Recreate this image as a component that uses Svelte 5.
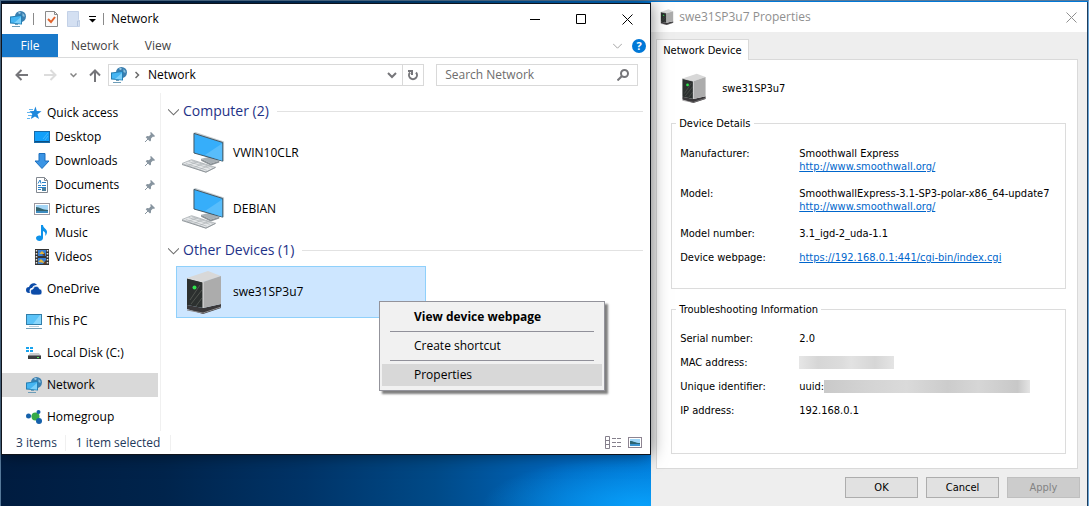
<script>
  const places = [
    { label: "Quick access", icon: "star" },
    { label: "Desktop", icon: "desktop", child: true, pinned: true },
    { label: "Downloads", icon: "download", child: true, pinned: true },
    { label: "Documents", icon: "document", child: true, pinned: true },
    { label: "Pictures", icon: "picture", child: true, pinned: true },
    { label: "Music", icon: "music", child: true },
    { label: "Videos", icon: "video", child: true },
    { label: "OneDrive", icon: "cloud", top: true },
    { label: "This PC", icon: "pc", top: true },
    { label: "Local Disk (C:)", icon: "disk", top: true },
    { label: "Network", icon: "network", top: true },
    { label: "Homegroup", icon: "homegroup", top: true },
  ];

  const details = [
    { label: "Manufacturer:", value: "Smoothwall Express", href: "http://www.smoothwall.org/" },
    { label: "Model:", value: "SmoothwallExpress-3.1-SP3-polar-x86_64-update7", href: "http://www.smoothwall.org/" },
    { label: "Model number:", value: "3.1_igd-2_uda-1.1" },
    { label: "Device webpage:", href: "https://192.168.0.1:441/cgi-bin/index.cgi" },
  ];

  const troubleshooting = [
    { label: "Serial number:", value: "2.0" },
    { label: "MAC address:", hidden: "mac" },
    { label: "Unique identifier:", value: "uuid:", hidden: "uuid" },
    { label: "IP address:", value: "192.168.0.1" },
  ];

  let current = $state("Network");
  let query = $state("");
</script>

{#snippet icon(name)}
  <svg width="16" height="16" viewBox="0 0 16 16" aria-hidden="true">
    {#if name === "star"}
      <path d="M9.500 1.500 10.800 6l4.700.2-4 3L13 14l-4-2.600L4.800 14 6.300 9 3.500 6.200 7.800 6z" fill="#1e88dc" />
      <path d="M3 4.500h4M1 7.500h4M2 10.500h4M1 13.500h3" stroke="#62b4ee" />
    {:else if name === "desktop"}
      <rect x=".5" y="2.500" width="15" height="11" fill="#12a0fb" stroke="#186aa8" />
      <path d="M1 12.500h14" stroke="#0b4f83" />
      <path d="M9 10l5-6M11 11l3-4" stroke="#5cc2ff" stroke-width=".7" />
    {:else if name === "download"}
      <path d="M5 .5h6V8h4L8 15.500 1 8h4z" fill="#3a94e4" stroke="#1c6fbd" />
    {:else if name === "document"}
      <path d="M2.500.5h8l3 3v12h-11z" fill="#fff" stroke="#828890" />
      <path d="M10.500.5v3h3" fill="none" stroke="#828890" />
      <path d="M4 6.500 6 3l1 3.500M8 5.500h4M4 8.500h3M8 8.500h4M4 10.500h8M4 12.500h3" fill="none" stroke="#2a82c9" />
      <path d="M8 11h4v3H8z" fill="#4d7f9b" />
    {:else if name === "picture"}
      <rect x=".5" y="2.500" width="15" height="11" fill="#fff" stroke="#9b98a0" />
      <path d="M2 4h12v8H2z" fill="#a4d5f5" />
      <path d="M2 6c4 0 6 3 12 3v3H2z" fill="#33626c" />
      <path d="M2 10h12v2H2z" fill="#3d8cc0" />
    {:else if name === "music"}
      <path d="M7 0h2c0 3 4 4 4 7 0 2-1 3-2 4 1-3 0-4-2-5v7c0 4-7 4-7 0 0-2 3-3 5-2z" fill="#0e92ea" />
    {:else if name === "video"}
      <path d="M1 0h14v16H1z" fill="#343434" />
      <path d="M2.500 1v15M13.500 1v15" stroke="#e6e6e6" stroke-width="1.500" stroke-dasharray="1.500 1.500" />
      <path d="M4 1h8v6H4zM4 9h8v6H4z" fill="#3a7fd4" />
      <path d="M5 5l3-3 3 3zM4 13l3-3 4 4z" fill="#e6b63c" />
      <path d="M8 6l3-2v3zM9 15l3-4v4z" fill="#5c3a23" />
    {:else if name === "cloud"}
      <path d="M0 9c0-2 1-3 3-3 1-4 6-5 8-2-3 0-4 1-5 3-2 0-3 2-2 5H3c-2 0-3-1-3-3z" fill="#0b4ba8" />
      <path d="M4.500 11c0-2 1-3 2.500-3 1-4 6-3 6.500 0 1.500 0 2.500 1 2.500 3s-1 3-3 3H8c-2 0-3.500-1-3.500-3z" fill="#0b4ba8" stroke="#fff" stroke-width=".7" />
    {:else if name === "pc"}
      <rect x=".5" y="1.500" width="15" height="10" fill="#5bc3f8" stroke="#327ea9" />
      <path d="M7 11 14 2h1v9z" fill="#8ad7fc" />
      <path d="M3 13.500h10" stroke="#b9ccd8" />
      <path d="M0 15.500h16" stroke="#74a0b8" />
    {:else if name === "disk"}
      <path d="M0 2h3v2H0zM4 2h3v2H4zM0 5h3v2H0zM4 5h3v2H4z" fill="#17a3ee" />
      <path d="M4 8h9l2 3H2z" fill="#c9cbcd" />
      <path d="M2 10.500h13V14H2z" fill="#3b3d3f" />
      <path d="M11 12.500h2" stroke="#5be45b" />
    {:else if name === "network"}
      <circle cx="10.500" cy="5.500" r="5.500" fill="#3a7fb0" />
      <path d="M8 1.500 10 1l1 1-2 1z" fill="#a8d4ea" />
      <path d="M12.500 2l2 2v2l-2-1z" fill="#8cc3e0" />
      <path d="M0 5.500 12 4v9.500L0 12.500z" fill="#2580b5" />
      <path d="M1 6.500 11 5v7.500L1 11.500z" fill="#45b5f2" />
      <path d="M4 12 11 6v6.500z" fill="#7bd0fb" />
      <path d="M2 15.500h8M5 13.500h3" stroke="#6e9db8" />
    {:else if name === "homegroup"}
      <path d="M3 7l7 0M12 3l-2 5 3 5" stroke="#9bc6dd" fill="none" />
      <circle cx="9.500" cy="7.500" r="4" fill="#35aa47" />
      <circle cx="2.500" cy="7" r="2.500" fill="#1561ab" />
      <circle cx="12.500" cy="3" r="2" fill="#1561ab" />
      <circle cx="13" cy="12" r="3" fill="#1561ab" />
    {/if}
  </svg>
{/snippet}

{#snippet chevron(size = 10)}
  <svg width={size} height={size} viewBox="0 0 10 10" fill="none" stroke="currentColor" aria-hidden="true">
    <path d="M0 3l5 5 5-5" />
  </svg>
{/snippet}

{#snippet computer()}
  <svg width="44" height="44" viewBox="0 0 46 46" aria-hidden="true">
    <path d="M20 29l9-2 10 4-9 3z" fill="#a8b0b5" />
    <path d="M20 29v2l10 5 9-3v-2l-9 3z" fill="#8b9297" />
    <path d="M12 2 14 1l30 10v20l-1 1z" fill="#c3cbd0" />
    <path d="M12.500 2.500 42.500 12v19.500l-30-8.500z" fill="#36aefa" stroke="#41525c" />
    <path d="M24 25 42 13v18z" fill="#58bdfb" />
    <path d="M0 34l10-4 25 8-10 5z" fill="#e6e8ea" stroke="#b5babd" />
    <path d="M4 34l22 7M7 32l22 7M10 31l22 7M7 36l9-4M13 38l9-4M19 40l9-4" stroke="#a9afb3" stroke-width=".7" />
    <path d="M0 35l25 8 10-5" fill="none" stroke="#8d9397" />
  </svg>
{/snippet}

{#snippet server(size)}
  <svg width={size} height={size} viewBox="0 0 44 44" aria-hidden="true">
    <path d="M5 35l16 3 18-4v4L21 44 5 39z" fill="#3a383a" />
    <path d="M5 40l16 3 18-6" stroke="#8c8a8c" fill="none" />
    <path d="M5 8 26 1l13 5-18 6z" fill="#d8d8d8" />
    <path d="M5 8l16 4v26L5 35z" fill="#2c302f" />
    <path d="M8 30l10-15M9 34l11-14M14 36l6-8" stroke="#50544f" />
    <path d="M21 12 39 6v28l-18 4z" fill="#acacac" />
    <path d="M5 8l16 4M21 12v26" stroke="#e6e6e6" fill="none" />
    <circle cx="12.500" cy="17.500" r="2" fill="#2fe44d" />
  </svg>
{/snippet}

{#snippet cross()}
  <svg width="11" height="11" viewBox="0 0 11 11" stroke="currentColor" aria-hidden="true">
    <path d="M.5.5l10 10M10.500.5l-10 10" />
  </svg>
{/snippet}

{#snippet rows(list)}
  <dl>
    {#each list as row}
      <div class="row">
        <dt>{row.label}</dt>
        <dd>
          {#if row.value}<span>{row.value}</span>{/if}
          {#if row.href}<a href={row.href}>{row.href}</a>{/if}
          {#if row.hidden}<span class="smudge {row.hidden}"></span>{/if}
        </dd>
      </div>
    {/each}
  </dl>
{/snippet}

<div class="desktop">
  <main class="explorer">
    <header class="titlebar">
      {@render icon("network")}
      <span class="divider"></span>
      <button class="quick" aria-label="Properties">
        <svg width="13" height="16" viewBox="0 0 13 16" aria-hidden="true">
          <path d="M.5.5h9l3 3v12H.5z" fill="#fafafa" stroke="#898989" />
          <path d="M9.500.5v3h3" fill="none" stroke="#898989" />
          <path d="M3 8l3 3 4-5" fill="none" stroke="#e1632b" stroke-width="2" />
        </svg>
      </button>
      <button class="quick" aria-label="New folder">
        <svg width="13" height="16" viewBox="0 0 13 16" aria-hidden="true">
          <path d="M.5.5h11v8l1 1v6H.5z" fill="#d4e0f2" stroke="#c3d1e7" />
          <path d="M10.500 15v-5h2" fill="none" stroke="#b4c5df" />
        </svg>
      </button>
      <button class="quick" aria-label="Customize Quick Access Toolbar">
        <svg width="7" height="8" viewBox="0 0 7 8" aria-hidden="true">
          <path d="M0 1.500h7" stroke="#000" />
          <path d="M0 4h7L3.500 7.500z" />
        </svg>
      </button>
      <span class="divider"></span>
      <h1>Network</h1>
      <div class="controls">
        <button aria-label="Minimize">
          <svg width="11" height="11" viewBox="0 0 11 11" stroke="currentColor"><path d="M0 5.500h10" /></svg>
        </button>
        <button aria-label="Maximize">
          <svg width="11" height="11" viewBox="0 0 11 11" fill="none" stroke="currentColor"><path d="M.5.5h9v9h-9z" /></svg>
        </button>
        <button aria-label="Close">{@render cross()}</button>
      </div>
    </header>

    <nav class="ribbon">
      <button class="file">File</button>
      <button>Network</button>
      <button>View</button>
      <button class="expand" aria-label="Expand the Ribbon">{@render chevron(9)}</button>
      <button class="help" aria-label="Help">?</button>
    </nav>

    <div class="navbar">
      <button class="arrow" aria-label="Back">
        <svg width="13" height="12" viewBox="0 0 13 12" fill="none" stroke="#76767a" stroke-width="2"><path d="M13 6H2M6.500 1l-5 5 5 5" /></svg>
      </button>
      <button class="arrow" aria-label="Forward">
        <svg width="13" height="12" viewBox="0 0 13 12" fill="none" stroke="#dcdcdc" stroke-width="2"><path d="M0 6h11M6.500 1l5 5-5 5" /></svg>
      </button>
      <button class="recent" aria-label="Recent locations">
        <svg width="7" height="5" viewBox="0 0 7 5" fill="none" stroke="#858585" stroke-width="1.500"><path d="M.5.5l3 3 3-3" /></svg>
      </button>
      <button class="up" aria-label="Up">
        <svg width="12" height="13" viewBox="0 0 12 13" fill="none" stroke="#76767a" stroke-width="2"><path d="M6 13V2M1 6.500l5-5 5 5" /></svg>
      </button>
      <div class="address">
        {@render icon("network")}
        <svg width="5" height="8" viewBox="0 0 5 8" fill="none" stroke="#6b6b6b" stroke-width="1.500"><path d="M.5 1l3 3-3 3" /></svg>
        <button class="crumb">Network</button>
        <button class="drop" aria-label="Previous locations">
          <svg width="10" height="7" viewBox="0 0 10 7" fill="none" stroke="#76767a" stroke-width="2"><path d="M1 1l4 4 4-4" /></svg>
        </button>
        <button class="refresh" aria-label="Refresh">
          <svg width="12" height="12" viewBox="0 0 12 12" fill="none" stroke="#76767a" stroke-width="2">
            <path d="M9 3.500a4 4 0 1 1-6 0M1 2h4v4" />
          </svg>
        </button>
      </div>
      <label class="search">
        <input type="text" placeholder="Search Network" aria-label="Search Network" bind:value={query} />
        <svg width="12" height="12" viewBox="0 0 12 12" fill="none" stroke="#76767a" stroke-width="2">
          <circle cx="7.500" cy="4.500" r="3.500" /><path d="M5 7l-4.500 4.500" />
        </svg>
      </label>
    </div>

    <div class="body">
      <aside>
        {#each places as place}
          <button
            class="place"
            class:child={place.child}
            class:top={place.top}
            class:current={place.label === current}
            onclick={() => (current = place.label)}>
            {@render icon(place.icon)}
            <span>{place.label}</span>
            {#if place.pinned}
              <svg class="pin" width="10" height="10" viewBox="0 0 10 10" aria-hidden="true">
                <path d="M6 0l4 4-1 1-1-.5L6 6.500l0 2-1 1L.7 5.200 2 4l2 .2L6 2 5 1z" fill="#87949f" />
                <path d="M0 10l3.500-3.500" stroke="#87949f" />
              </svg>
            {/if}
          </button>
        {/each}
      </aside>

      <div class="files">
        <section>
          <h2>{@render chevron(11)}Computer (2)</h2>
          <button class="item">{@render computer()}VWIN10CLR</button>
          <button class="item">{@render computer()}DEBIAN</button>
        </section>
        <section>
          <h2>{@render chevron(11)}Other Devices (1)</h2>
          <div class="anchor">
            <button class="item selected">{@render server(44)}swe31SP3u7</button>
            <div class="menu" role="menu">
              <button role="menuitem" class="default">View device webpage</button>
              <hr />
              <button role="menuitem">Create shortcut</button>
              <hr />
              <button role="menuitem" class="hover">Properties</button>
            </div>
          </div>
        </section>
      </div>
    </div>

    <footer class="status">
      <span>3 items</span>
      <span class="picked">1 item selected</span>
      <button class="details" aria-label="Details view">
        <svg width="17" height="13" viewBox="0 0 17 13" fill="none" stroke="#85808c">
          <path d="M.5.5h4v12h-4zM.5 4.500h4M.5 8.500h4M7 2.500h4M12 2.500h4M7 6.500h4M12 6.500h4M7 10.500h4M12 10.500h4" />
        </svg>
      </button>
      <button aria-label="Large icons view">
        <svg width="14" height="11" viewBox="0 0 14 11">
          <rect x=".5" y=".5" width="13" height="10" fill="#fff" stroke="#8d8491" />
          <path d="M2 2h10v7H2z" fill="#9fd6f7" />
          <path d="M2 4c4 0 5 2 10 2v2H2z" fill="#2b6473" />
          <path d="M2 7h10v2H2z" fill="#3c93cf" />
        </svg>
      </button>
    </footer>
  </main>

  <div class="dialog" role="dialog" aria-labelledby="dialog-title">
    <header>
      {@render server(16)}
      <h1 id="dialog-title">swe31SP3u7 Properties</h1>
      <button aria-label="Close">{@render cross()}</button>
    </header>
    <div class="tabs" role="tablist">
      <button role="tab" aria-selected="true">Network Device</button>
    </div>
    <div class="panel" role="tabpanel">
      <div class="device">{@render server(30)}<span>swe31SP3u7</span></div>
      <fieldset>
        <legend>Device Details</legend>
        {@render rows(details)}
      </fieldset>
      <fieldset class="trouble">
        <legend>Troubleshooting Information</legend>
        {@render rows(troubleshooting)}
      </fieldset>
    </div>
    <div class="buttons">
      <button>OK</button>
      <button>Cancel</button>
      <button disabled>Apply</button>
    </div>
  </div>
</div>

<style>
  :global(body) {
    margin: 0;
  }

  * {
    box-sizing: border-box;
  }

  button,
  input {
    margin: 0;
    padding: 0;
    border: 0;
    background: none;
    color: inherit;
    font: inherit;
  }

  h1,
  h2,
  dl,
  dd {
    margin: 0;
    font: inherit;
  }

  svg {
    display: block;
    flex: none;
  }

  .desktop {
    display: flex;
    align-items: flex-start;
    min-height: 100vh;
    padding-top: 1px;
    border: 1px solid #56799a;
    border-right-color: #6aa5d6;
    border-bottom-color: #a9c6de;
    background:
      radial-gradient(ellipse 160px 50px at 59% 100%, #08a0fa, transparent),
      linear-gradient(90deg, #001c40 0, #00244c 15%, #003468 28%, #004a88 40%, #0068c0 52%, #0078d7 60%, #0078d7 100%);
    font: 12px/16px "Open Sans", "Noto Sans", sans-serif;
    color: #000;
  }

  /* Explorer window */
  .explorer {
    position: relative;
    z-index: 1;
    flex: 1;
    min-width: 0;
    margin-top: 1px;
    border: 1px solid #10141c;
    background: #fff;
    box-shadow: 0 0 16px rgba(0, 0, 0, 0.5);
  }

  .titlebar {
    display: flex;
    align-items: center;
    height: 30px;
    padding-left: 8px;
  }

  .titlebar h1 {
    margin-left: 7px;
  }

  .divider {
    width: 1px;
    height: 12px;
    margin-left: 7px;
    background: #8a8a8a;
  }

  .quick {
    margin-left: 9px;
  }

  .divider + .quick {
    margin-left: 11px;
  }

  .controls {
    display: flex;
    align-self: stretch;
    margin-left: auto;
  }

  .controls button {
    display: grid;
    place-items: center;
    width: 46px;
  }

  .ribbon {
    display: flex;
    align-items: center;
    height: 24px;
    border-bottom: 1px solid #dadbdc;
    color: #444;
  }

  .ribbon button {
    height: 23px;
    padding: 0 13px;
  }

  .ribbon .file {
    width: 56px;
    background: #1979ca;
    color: #fff;
  }

  .ribbon .expand {
    margin-left: auto;
    padding: 0 10px;
    color: #9b9b9b;
  }

  .ribbon .help {
    width: 14px;
    height: 14px;
    margin-right: 4px;
    padding: 0;
    border-radius: 50%;
    background: #0078d7;
    color: #fff;
    font-size: 11px;
    font-weight: bold;
    line-height: 14px;
  }

  .navbar {
    display: flex;
    align-items: center;
    padding: 6px 12px 7px 13px;
  }

  .arrow {
    margin-right: 16px;
  }

  .recent {
    margin-right: 12px;
    margin-left: -3px;
  }

  .up {
    margin-right: 7px;
  }

  .address {
    display: flex;
    flex: 1;
    align-items: center;
    gap: 8px;
    height: 22px;
    padding-left: 2px;
    border: 1px solid #d9d9d9;
  }

  .drop {
    margin-left: auto;
    margin-right: -4px;
  }

  .refresh {
    display: grid;
    place-items: center;
    width: 21px;
    height: 20px;
    margin-left: 1px;
    border-left: 1px solid #d9d9d9;
  }

  .search {
    display: flex;
    align-items: center;
    width: 32%;
    min-width: 202px;
    height: 22px;
    margin-left: 12px;
    padding: 0 8px;
    border: 1px solid #d9d9d9;
  }

  .search input {
    flex: 1;
    min-width: 0;
    outline: 0;
  }

  .search input::placeholder {
    color: #6d6d6d;
    opacity: 1;
  }

  .body {
    display: flex;
  }

  aside {
    width: 159px;
    padding: 8px 2px 2px 0;
    border-right: 1px solid #f0f0f0;
  }

  .place {
    display: flex;
    align-items: center;
    gap: 5px;
    width: 100%;
    height: 24px;
    padding: 0 3px 0 24px;
    white-space: nowrap;
  }

  .place.child {
    padding-left: 32px;
  }

  .place.top {
    margin-top: 8px;
  }

  .place.current {
    background: #d9d9d9;
  }

  .pin {
    margin-left: auto;
  }

  .files {
    flex: 1;
    min-width: 0;
    padding: 6px 7px 0;
  }

  section {
    display: flex;
    flex-direction: column;
    gap: 4px;
    margin-bottom: 3px;
  }

  h2 {
    display: flex;
    align-items: center;
    gap: 4px;
    height: 24px;
    color: #1e3287;
    font-size: 14px;
    line-height: 24px;
  }

  h2 :global(svg) {
    color: #6d6d6d;
  }

  h2::after {
    content: "";
    flex: 1;
    height: 1px;
    margin-left: 4px;
    background: #e2e2e2;
  }

  .item {
    display: flex;
    align-items: center;
    gap: 7px;
    width: 250px;
    height: 52px;
    margin-left: 8px;
    padding-left: 5px;
    border: 1px solid transparent;
    text-align: left;
  }

  .item.selected {
    border-color: #8fd0fb;
    background: #cde6ff;
  }

  .anchor {
    position: relative;
  }

  .menu {
    position: absolute;
    top: 35px;
    left: 211px;
    width: 226px;
    padding: 4px 2px;
    border: 1px solid #93939b;
    background: #f1f1f1;
    box-shadow: 3px 3px 2px rgba(0, 0, 0, 0.5);
  }

  .menu button {
    display: block;
    width: 100%;
    height: 22px;
    padding-left: 32px;
    text-align: left;
  }

  .menu .default {
    font-weight: bold;
  }

  .menu .hover {
    background: #d8d8d8;
  }

  .menu hr {
    margin: 3px 8px;
    border: 0;
    border-top: 1px solid #91919a;
  }

  .status {
    display: flex;
    align-items: center;
    height: 23px;
    padding: 0 8px 0 14px;
    color: #1e395b;
  }

  .picked {
    margin-left: 8px;
    padding: 0 10px;
    border: solid #f0f0f0;
    border-width: 0 1px;
  }

  .details {
    margin-left: auto;
    margin-right: 6px;
  }

  /* Properties dialog */
  .dialog {
    display: flex;
    flex-direction: column;
    width: calc(40% + 2px);
    min-height: calc(100vh - 3px);
    border-right: 1px solid #1f3d5c;
    background: #eee;
    font: 11px/13px "DejaVu Sans Condensed", "DejaVu Sans", sans-serif;
  }

  .dialog header {
    display: flex;
    align-items: center;
    gap: 4px;
    height: 30px;
    padding: 0 10px 0 8px;
    background: #fff;
    color: #8f8f8f;
    font: 12px/16px "Open Sans", "Noto Sans", sans-serif;
  }

  .dialog header button {
    margin-left: auto;
  }

  .tabs {
    display: flex;
    padding: 7px 5px 0;
  }

  .tabs button {
    position: relative;
    height: 21px;
    margin-bottom: -1px;
    padding: 0 6px;
    border: 1px solid #d9d9d9;
    border-bottom: 0;
    background: #fff;
  }

  .panel {
    flex: 1;
    margin: 0 9px 0 5px;
    padding: 13px 11px 14px 14px;
    border: 1px solid #d9d9d9;
    background: #fff;
  }

  .device {
    display: flex;
    align-items: center;
    gap: 13px;
    height: 30px;
    margin-bottom: 14px;
    padding-left: 8px;
  }

  fieldset {
    min-width: 0;
    min-height: 172px;
    margin: 0;
    padding: 17px 8px;
    border: 1px solid #dcdcdc;
  }

  fieldset.trouble {
    min-height: 151px;
    margin-top: 14px;
    padding-top: 16px;
  }

  legend {
    margin-left: -4px;
    padding: 0 3px;
  }

  dl {
    display: flex;
    flex-direction: column;
    gap: 11px;
  }

  .row {
    display: flex;
  }

  .row:nth-child(-n + 2) dd:has(a) {
    padding-bottom: 3px;
  }

  dt {
    width: 119px;
  }

  dd {
    display: flex;
    flex: 1;
    flex-wrap: wrap;
    min-width: 0;
  }

  dd span:not(.smudge) + a {
    flex-basis: 100%;
  }

  a {
    color: #0066cc;
  }

  .smudge {
    width: 95px;
    height: 13px;
    background: linear-gradient(90deg, #e6e6e6, #d6d6d6 20%, #dcdcdc 45%, #e2e2e2 55%, #d6d6d6 80%, #e4e4e4);
  }

  .smudge.uuid {
    width: 206px;
    background: linear-gradient(90deg, #c9c9c9, #d3d3d3 20%, #dadada 40%, #cccccc 60%, #d6d6d6 75%, #c8c8c8 94%, #e4e4e4);
  }

  .buttons {
    display: flex;
    justify-content: flex-end;
    gap: 8px;
    padding: 8px 7px;
  }

  .buttons button {
    width: 73px;
    height: 21px;
    border: 1px solid #adadad;
    background: #e1e1e1;
  }

  .buttons button:disabled {
    border-color: #bfbfbf;
    background: #ccc;
    color: #838383;
  }
</style>
